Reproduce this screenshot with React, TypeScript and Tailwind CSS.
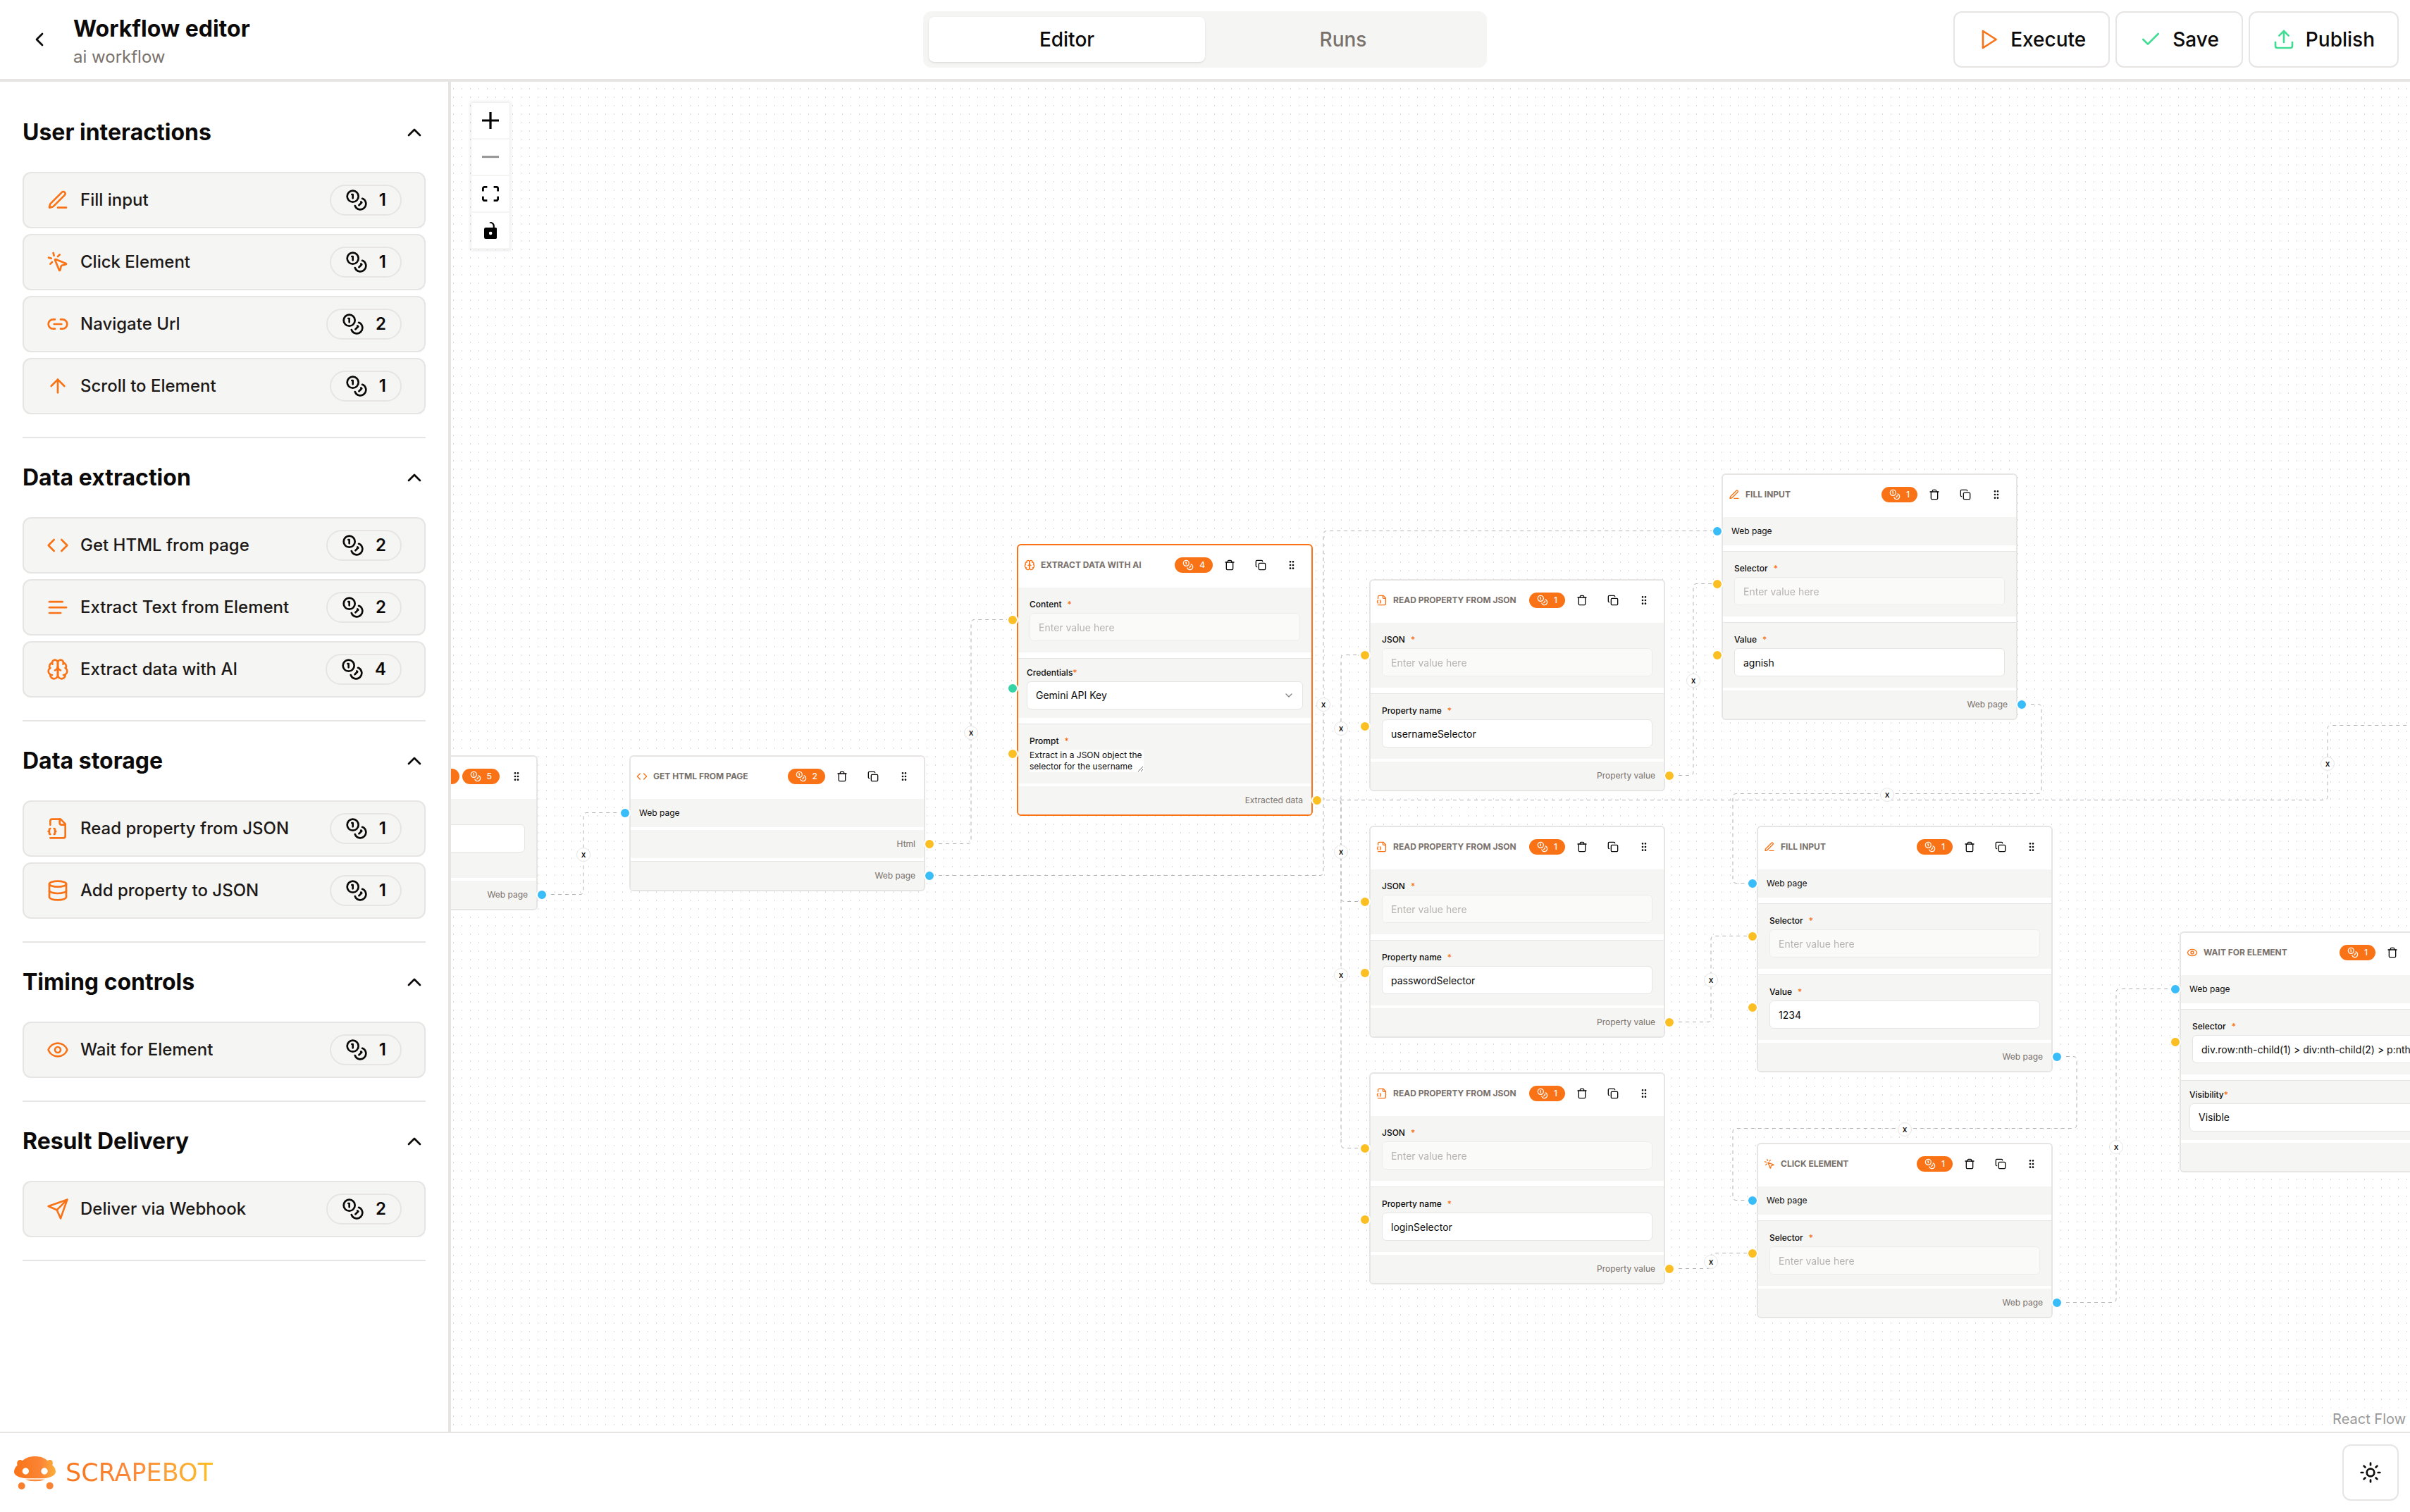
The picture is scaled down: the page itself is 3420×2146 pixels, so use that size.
import { ReactNode, SVGProps, useId } from 'react';
import {
  ArrowUp,
  Check,
  ChevronDown,
  ChevronLeft,
  ChevronUp,
  Code,
  Copy,
  Database,
  Eye,
  GripVertical,
  Link2,
  MousePointerClick,
  Sun,
  Trash,
  Upload,
} from 'lucide-react';

type Point = [number, number];

function Icon({ children, ...props }: SVGProps<SVGSVGElement>) {
  return (
    <svg
      viewBox="0 0 24 24"
      fill="none"
      stroke="currentColor"
      strokeWidth="2"
      strokeLinecap="round"
      strokeLinejoin="round"
      aria-hidden="true"
      {...props}
    >
      {children}
    </svg>
  );
}

const CoinsIcon = (props: SVGProps<SVGSVGElement>) => (
  <Icon {...props}>
    <circle cx="8" cy="8" r="6" />
    <path d="M18.09 10.37A6 6 0 1 1 10.34 18" />
    <path d="M7 6h1v4" />
    <path d="m16.71 13.88.7.71-2.82 2.82" />
  </Icon>
);

const PenLineIcon = (props: SVGProps<SVGSVGElement>) => (
  <Icon {...props}>
    <path d="M12 20h9" />
    <path d="M16.376 3.622a1 1 0 0 1 3.002 3.002L7.368 18.635a2 2 0 0 1-.855.506l-2.872.838a.5.5 0 0 1-.62-.62l.838-2.872a2 2 0 0 1 .506-.854z" />
  </Icon>
);

const TextIcon = (props: SVGProps<SVGSVGElement>) => (
  <Icon {...props}>
    <path d="M17 6.1H3" />
    <path d="M21 12.1H3" />
    <path d="M15.1 18H3" />
  </Icon>
);

const BrainIcon = (props: SVGProps<SVGSVGElement>) => (
  <Icon {...props}>
    <path d="M12 5a3 3 0 1 0-5.997.125 4 4 0 0 0-2.526 5.77 4 4 0 0 0 .556 6.588A4 4 0 1 0 12 18Z" />
    <path d="M12 5a3 3 0 1 1 5.997.125 4 4 0 0 1 2.526 5.77 4 4 0 0 1-.556 6.588A4 4 0 1 1 12 18Z" />
    <path d="M15 13a4.5 4.5 0 0 1-3-4 4.5 4.5 0 0 1-3 4" />
    <path d="M17.599 6.5a3 3 0 0 0 .399-1.375" />
    <path d="M6.003 5.125A3 3 0 0 0 6.401 6.5" />
    <path d="M3.477 10.896a4 4 0 0 1 .585-.396" />
    <path d="M19.938 10.5a4 4 0 0 1 .585.396" />
    <path d="M6 18a4 4 0 0 1-1.967-.516" />
    <path d="M19.967 17.484A4 4 0 0 1 18 18" />
  </Icon>
);

const FileJsonIcon = (props: SVGProps<SVGSVGElement>) => (
  <Icon {...props}>
    <path d="M4 22h14a2 2 0 0 0 2-2V7l-5-5H6a2 2 0 0 0-2 2v4" />
    <path d="M14 2v4a2 2 0 0 0 2 2h4" />
    <path d="M4 12a1 1 0 0 0-1 1v1a1 1 0 0 1-1 1 1 1 0 0 1 1 1v1a1 1 0 0 0 1 1" />
    <path d="M8 18a1 1 0 0 0 1-1v-1a1 1 0 0 1 1-1 1 1 0 0 1-1-1v-1a1 1 0 0 0-1-1" />
  </Icon>
);

const SendIcon = (props: SVGProps<SVGSVGElement>) => (
  <Icon {...props}>
    <path d="m22 2-7 20-4-9-9-4Z" />
    <path d="M22 2 11 13" />
  </Icon>
);

const PlayIcon = (props: SVGProps<SVGSVGElement>) => (
  <Icon {...props}>
    <path d="m6 3 14 9-14 9z" />
  </Icon>
);

const taskIcons = {
  fill: PenLineIcon,
  click: MousePointerClick,
  navigate: Link2,
  scroll: ArrowUp,
  html: Code,
  text: TextIcon,
  ai: BrainIcon,
  readJson: FileJsonIcon,
  addJson: Database,
  wait: Eye,
  webhook: SendIcon,
};

type TaskIcon = keyof typeof taskIcons;

const sections: { title: string; tasks: { icon: TaskIcon; label: string; credits: number }[] }[] = [
  {
    title: 'User interactions',
    tasks: [
      { icon: 'fill', label: 'Fill input', credits: 1 },
      { icon: 'click', label: 'Click Element', credits: 1 },
      { icon: 'navigate', label: 'Navigate Url', credits: 2 },
      { icon: 'scroll', label: 'Scroll to Element', credits: 1 },
    ],
  },
  {
    title: 'Data extraction',
    tasks: [
      { icon: 'html', label: 'Get HTML from page', credits: 2 },
      { icon: 'text', label: 'Extract Text from Element', credits: 2 },
      { icon: 'ai', label: 'Extract data with AI', credits: 4 },
    ],
  },
  {
    title: 'Data storage',
    tasks: [
      { icon: 'readJson', label: 'Read property from JSON', credits: 1 },
      { icon: 'addJson', label: 'Add property to JSON', credits: 1 },
    ],
  },
  {
    title: 'Timing controls',
    tasks: [{ icon: 'wait', label: 'Wait for Element', credits: 1 }],
  },
  {
    title: 'Result Delivery',
    tasks: [{ icon: 'webhook', label: 'Deliver via Webhook', credits: 2 }],
  },
];

const handleColors = {
  page: 'bg-[#38bdf8]',
  string: 'bg-[#fbbf24]',
  credential: 'bg-[#34d3a6]',
};

type HandleKind = keyof typeof handleColors;

type NodeInput = {
  label: string;
  type: 'page' | 'string' | 'select' | 'textarea';
  handle?: HandleKind;
  value?: string;
  connected?: boolean;
};

type WorkflowNode = {
  x: number;
  y: number;
  icon: TaskIcon;
  title: string;
  credits: number;
  entryPoint?: boolean;
  selected?: boolean;
  inputs: NodeInput[];
  outputs: { label: string; handle: HandleKind }[];
};

const readProperty = (y: number, value: string): WorkflowNode => ({
  x: 1303,
  y,
  icon: 'readJson',
  title: 'Read property from JSON',
  credits: 1,
  inputs: [
    { label: 'JSON', type: 'string', handle: 'string', connected: true },
    { label: 'Property name', type: 'string', handle: 'string', value },
  ],
  outputs: [{ label: 'Property value', handle: 'string' }],
});

const fillInput = (x: number, y: number, value: string): WorkflowNode => ({
  x,
  y,
  icon: 'fill',
  title: 'Fill input',
  credits: 1,
  inputs: [
    { label: 'Web page', type: 'page', handle: 'page' },
    { label: 'Selector', type: 'string', handle: 'string', connected: true },
    { label: 'Value', type: 'string', handle: 'string', value },
  ],
  outputs: [{ label: 'Web page', handle: 'page' }],
});

const nodes: WorkflowNode[] = [
  {
    x: -297,
    y: 956,
    icon: 'navigate',
    title: '',
    credits: 5,
    entryPoint: true,
    inputs: [{ label: '', type: 'string', value: '' }],
    outputs: [{ label: 'Web page', handle: 'page' }],
  },
  {
    x: 253,
    y: 956,
    icon: 'html',
    title: 'Get HTML from page',
    credits: 2,
    inputs: [{ label: 'Web page', type: 'page', handle: 'page' }],
    outputs: [
      { label: 'Html', handle: 'string' },
      { label: 'Web page', handle: 'page' },
    ],
  },
  {
    x: 803,
    y: 656,
    icon: 'ai',
    title: 'Extract data with AI',
    credits: 4,
    selected: true,
    inputs: [
      { label: 'Content', type: 'string', handle: 'string', connected: true },
      { label: 'Credentials', type: 'select', handle: 'credential', value: 'Gemini API Key' },
      {
        label: 'Prompt',
        type: 'textarea',
        handle: 'string',
        value: 'Extract in a JSON object the selector for the username',
      },
    ],
    outputs: [{ label: 'Extracted data', handle: 'string' }],
  },
  readProperty(706, 'usernameSelector'),
  readProperty(1056, 'passwordSelector'),
  readProperty(1406, 'loginSelector'),
  fillInput(1803, 556, 'agnish'),
  fillInput(1853, 1056, '1234'),
  {
    x: 1853,
    y: 1506,
    icon: 'click',
    title: 'Click Element',
    credits: 1,
    inputs: [
      { label: 'Web page', type: 'page', handle: 'page' },
      { label: 'Selector', type: 'string', handle: 'string', connected: true },
    ],
    outputs: [{ label: 'Web page', handle: 'page' }],
  },
  {
    x: 2453,
    y: 1206,
    icon: 'wait',
    title: 'Wait for Element',
    credits: 1,
    inputs: [
      { label: 'Web page', type: 'page', handle: 'page' },
      {
        label: 'Selector',
        type: 'string',
        handle: 'string',
        value: 'div.row:nth-child(1) > div:nth-child(2) > p:nth-child(1)',
      },
      { label: 'Visibility', type: 'select', value: 'Visible' },
    ],
    outputs: [{ label: 'Web page', handle: 'page' }],
  },
];

const edges: { source: Point; target: Point }[] = [
  { source: [137, 1154], target: [239, 1038] },
  { source: [687, 1082], target: [789, 764] },
  { source: [687, 1127], target: [1789, 638] },
  { source: [1237, 1020], target: [1289, 814] },
  { source: [1237, 1020], target: [1289, 1164] },
  { source: [1237, 1020], target: [1289, 1514] },
  { source: [1237, 1020], target: [4089, 914] },
  { source: [1737, 985], target: [1789, 713] },
  { source: [1737, 1335], target: [1839, 1213] },
  { source: [1737, 1685], target: [1839, 1663] },
  { source: [2237, 884], target: [1839, 1138] },
  { source: [2287, 1384], target: [1839, 1588] },
  { source: [2287, 1733], target: [2439, 1288] },
];

// Orthogonal route with small rounded corners
function edgePath([sx, sy]: Point, [tx, ty]: Point) {
  const midX = (sx + tx) / 2;
  const midY = (sy + ty) / 2;
  const points: Point[] =
    tx > sx
      ? [[sx, sy], [midX, sy], [midX, ty], [tx, ty]]
      : [[sx, sy], [sx + 20, sy], [sx + 20, midY], [tx - 20, midY], [tx - 20, ty], [tx, ty]];

  return points.reduce((path, [x, y], i) => {
    if (i === 0) return `M${x} ${y}`;
    if (i === points.length - 1) return `${path}L${x} ${y}`;
    const [px, py] = points[i - 1];
    const [nx, ny] = points[i + 1];
    const r = Math.min(5, (Math.abs(x - px) + Math.abs(y - py)) / 2, (Math.abs(nx - x) + Math.abs(ny - y)) / 2);
    const inX = x - Math.sign(x - px) * r;
    const inY = y - Math.sign(y - py) * r;
    const outX = x + Math.sign(nx - x) * r;
    const outY = y + Math.sign(ny - y) * r;
    return `${path}L${inX} ${inY}Q${x} ${y} ${outX} ${outY}`;
  }, '');
}

function Handle({ kind, side }: { kind: HandleKind; side: 'left' | 'right' }) {
  return (
    <span
      className={`absolute top-1/2 size-4 -translate-y-1/2 rounded-full border-2 border-white ${
        side === 'left' ? '-left-4' : '-right-4'
      } ${handleColors[kind]}`}
    />
  );
}

function NodeField({ input }: { input: NodeInput }) {
  const id = useId();
  const { label, type, value, connected, handle } = input;

  if (type === 'page') {
    return (
      <div className="relative bg-stone-100 p-3">
        <p className="text-xs leading-4">{label}</p>
        {handle && <Handle kind={handle} side="left" />}
      </div>
    );
  }

  if (type === 'select') {
    return (
      <div className="relative flex flex-col gap-1 bg-stone-100 p-3">
        <label htmlFor={id} className="text-xs leading-4 font-medium">
          {label}
          <span className="text-[#f97316]">*</span>
        </label>
        <div className="relative">
          <select
            id={id}
            defaultValue={value}
            className="h-10 w-full appearance-none rounded-md border border-stone-200 bg-white px-3 text-sm"
          >
            <option>{value}</option>
          </select>
          <ChevronDown className="pointer-events-none absolute top-3 right-3 size-4 opacity-50" />
        </div>
        {handle && <Handle kind={handle} side="left" />}
      </div>
    );
  }

  return (
    <div className="relative bg-stone-100 p-3">
      <div className="flex flex-col gap-1 p-1">
        <label htmlFor={id} className="flex h-4 text-xs leading-4 font-medium">
          {label}
          <span className="px-2 text-[#f97316]">*</span>
        </label>
        {type === 'textarea' ? (
          <textarea
            id={id}
            rows={2}
            defaultValue={value}
            className="block h-8 w-[162px] resize overflow-hidden bg-white text-xs leading-4"
          />
        ) : (
          <input
            id={id}
            type="text"
            defaultValue={value}
            disabled={connected}
            placeholder={connected ? 'Enter value here' : undefined}
            className="h-10 w-full rounded-md border border-stone-200 bg-white px-3 text-sm placeholder:text-stone-500 disabled:opacity-50"
          />
        )}
        {label === '' && <p className="h-4 text-xs leading-4" />}
      </div>
      {handle && <Handle kind={handle} side="left" />}
    </div>
  );
}

function NodeButton({ label, children }: { label: string; children: ReactNode }) {
  return (
    <button type="button" aria-label={label} className="flex size-10 items-center justify-center rounded-md">
      {children}
    </button>
  );
}

function NodeCard({ node }: { node: WorkflowNode }) {
  const TaskIconView = taskIcons[node.icon];

  return (
    <article
      className={`absolute flex w-[420px] flex-col gap-1 rounded-md border-2 bg-white ${
        node.selected ? 'border-[#f97316]' : 'border-stone-200'
      }`}
      style={{ left: node.x, top: node.y }}
    >
      <div className="flex items-center gap-2 p-2">
        <TaskIconView className="size-4 shrink-0 text-[#f97316]" />
        <div className="flex w-full items-center justify-between">
          <h3 className="text-xs font-bold whitespace-nowrap text-stone-500 uppercase">{node.title}</h3>
          <div className="flex items-center gap-1">
            {node.entryPoint && <span className="h-[22px] w-24 rounded-full bg-[#f97316]" />}
            <span className="flex items-center gap-2 rounded-full border border-transparent bg-[#f97316] bg-clip-border px-2.5 py-0.5 text-xs leading-4 font-medium text-stone-50">
              <CoinsIcon className="size-4" />
              {node.credits}
            </span>
            {!node.entryPoint && (
              <>
                <NodeButton label="Delete node">
                  <Trash className="size-4" />
                </NodeButton>
                <NodeButton label="Duplicate node">
                  <Copy className="size-4" />
                </NodeButton>
              </>
            )}
            <NodeButton label="Drag node">
              <GripVertical className="size-4" />
            </NodeButton>
          </div>
        </div>
      </div>
      <div className="flex flex-col gap-2">
        {node.inputs.map((input, i) => (
          <div key={input.label} className={i > 0 ? 'border-t border-stone-200' : ''}>
            <NodeField input={input} />
          </div>
        ))}
      </div>
      <div className="flex flex-col gap-1">
        {node.outputs.map((output, i) => (
          <div key={output.label} className={i > 0 ? 'border-t border-stone-200' : ''}>
            <div className="relative rounded-b-sm bg-stone-100 p-3 text-right">
              <p className="text-xs leading-4 text-stone-500">{output.label}</p>
              <Handle kind={output.handle} side="right" />
            </div>
          </div>
        ))}
      </div>
    </article>
  );
}

function FlowControls() {
  const button = 'flex h-[52px] w-[54px] items-center justify-center border-b-2 border-stone-100 bg-white';
  return (
    <div className="absolute top-[30px] left-[29px] flex flex-col shadow-[0_0_4px_2px_rgba(0,0,0,0.08)]">
      <button type="button" aria-label="Zoom in" className={button}>
        <svg viewBox="0 0 32 32" className="size-6">
          <path d="M32 18.133H18.133V32h-4.266V18.133H0v-4.266h13.867V0h4.266v13.867H32z" />
        </svg>
      </button>
      <button type="button" aria-label="Zoom out" disabled className={button}>
        <svg viewBox="0 0 32 5" className="w-6 opacity-40">
          <path d="M0 0h32v4.2H0z" />
        </svg>
      </button>
      <button type="button" aria-label="Fit view" className={button}>
        <svg viewBox="0 0 32 30" className="w-6">
          <path d="M3.692 4.63c0-.53.4-.938.939-.938h5.215V0H4.708C2.13 0 0 2.054 0 4.63v5.216h3.692V4.631zM27.354 0h-5.2v3.692h5.17c.53 0 .984.4.984.939v5.215H32V4.631A4.624 4.624 0 0027.354 0zm.954 24.83c0 .532-.4.94-.939.94h-5.215v3.768h5.215c2.577 0 4.631-2.13 4.631-4.707v-5.139h-3.692v5.139zm-23.677.94c-.531 0-.939-.4-.939-.94v-5.138H0v5.139c0 2.577 2.13 4.707 4.708 4.707h5.138V25.77H4.631z" />
        </svg>
      </button>
      <button type="button" aria-label="Toggle interactivity" className={button}>
        <svg viewBox="0 0 25 32" className="h-6">
          <path d="M21.333 10.667H19.81V7.619C19.81 3.429 16.38 0 12.19 0c-4.114 1.828-1.37 2.133.305 2.438 1.676.305 4.42 2.59 4.42 5.181v3.048H3.047A3.056 3.056 0 000 13.714v15.238A3.056 3.056 0 003.048 32h18.285a3.056 3.056 0 003.048-3.048V13.714a3.056 3.056 0 00-3.048-3.047zM12.19 24.533a3.056 3.056 0 01-3.047-3.047 3.056 3.056 0 013.047-3.048 3.056 3.056 0 013.048 3.048 3.056 3.056 0 01-3.048 3.047z" />
        </svg>
      </button>
    </div>
  );
}

function FlowCanvas() {
  return (
    <main className="relative min-w-0 flex-1 overflow-hidden bg-white">
      <svg className="absolute inset-0 size-full" aria-hidden="true">
        <defs>
          <pattern id="dots" width="12" height="12" patternUnits="userSpaceOnUse">
            <rect x="3" y="9" width="1" height="2" fill="#91919a" fillOpacity="0.36" />
          </pattern>
        </defs>
        <rect width="100%" height="100%" fill="url(#dots)" />
        {edges.map(({ source, target }) => (
          <path
            key={`${source}-${target}`}
            d={edgePath([source[0], source[1] - 0.5], [target[0], target[1] - 0.5])}
            fill="none"
            stroke="#b1b1b7"
            strokeDasharray="5"
            strokeDashoffset="5"
          />
        ))}
      </svg>
      {nodes.map((node) => (
        <NodeCard key={`${node.x}-${node.y}`} node={node} />
      ))}
      {edges.map(({ source, target }) => (
        <button
          key={`${source}-${target}`}
          type="button"
          aria-label="Delete edge"
          className="absolute flex size-5 -translate-1/2 items-center justify-center rounded-full border border-stone-200 bg-white text-xs leading-none font-medium"
          style={{ left: (source[0] + target[0]) / 2, top: Math.round((source[1] + target[1]) / 2) + 1 }}
        >
          x
        </button>
      ))}
      <FlowControls />
      <a
        href="https://reactflow.dev"
        className="absolute right-0 bottom-0 bg-white/50 px-1.5 py-1 text-[20px] leading-7 text-[#999]"
      >
        React Flow
      </a>
    </main>
  );
}

function Topbar() {
  const action = 'flex h-20 items-center gap-[15px] rounded-xl border-2 border-stone-200 bg-white px-8 text-[28px] font-medium';
  return (
    <header className="grid h-[116px] shrink-0 grid-cols-[1fr_800px_1fr] items-center border-b-4 border-stone-200 px-4">
      <div className="flex items-center gap-2">
        <button type="button" aria-label="Back" className="flex size-20 items-center justify-center">
          <ChevronLeft className="size-8" />
        </button>
        <div className="pt-0.5">
          <h1 className="text-[32px] leading-[48px] font-bold">Workflow editor</h1>
          <p className="text-2xl leading-8 text-stone-500">ai workflow</p>
        </div>
      </div>
      <nav className="grid h-20 grid-cols-2 rounded-xl bg-stone-100 p-2 text-[28px] font-medium">
        <a href="#editor" className="flex items-center justify-center rounded-lg bg-white shadow-sm">
          Editor
        </a>
        <a href="#runs" className="flex items-center justify-center rounded-lg text-stone-500">
          Runs
        </a>
      </nav>
      <div className="flex justify-end gap-2">
        <button type="button" className={action}>
          <PlayIcon className="size-8 text-[#f97316]" />
          Execute
        </button>
        <button type="button" className={action}>
          <Check className="size-8 text-[#43dc95]" />
          Save
        </button>
        <button type="button" className={action}>
          <Upload className="size-8 text-[#43dc95]" />
          Publish
        </button>
      </div>
    </header>
  );
}

function TaskMenu() {
  return (
    <aside className="w-[640px] shrink-0 overflow-auto border-r-4 border-stone-200 px-8 pt-4">
      {sections.map((section) => (
        <section key={section.title} className="border-b-2 border-stone-200 pb-8">
          <h2>
            <button type="button" aria-expanded="true" className="flex w-full items-center justify-between py-8">
              <span className="text-[32px] leading-[48px] font-bold">{section.title}</span>
              <ChevronUp className="size-8" />
            </button>
          </h2>
          <div className="flex flex-col gap-2">
            {section.tasks.map(({ icon, label, credits }) => {
              const TaskIconView = taskIcons[icon];
              return (
                <button
                  key={label}
                  type="button"
                  className="flex h-20 w-full items-center justify-between rounded-xl border-2 border-stone-200 bg-stone-100 px-8 text-2xl font-medium text-stone-900"
                >
                  <span className="flex items-center gap-4">
                    <TaskIconView className="size-8 text-[#f97316]" />
                    {label}
                  </span>
                  <span className="flex h-11 items-center gap-4 rounded-full border-2 border-stone-200 px-5 text-2xl leading-8 font-semibold text-stone-950">
                    <CoinsIcon className="size-8" />
                    {credits}
                  </span>
                </button>
              );
            })}
          </div>
        </section>
      ))}
    </aside>
  );
}

function Logo() {
  return (
    <a href="/" className="flex items-center gap-3.5">
      <svg viewBox="33 52 177 141" className="h-[47px] w-[59px]" aria-hidden="true">
        <defs>
          <linearGradient id="bot" x1="0" x2="1" y1="0" y2="0">
            <stop offset="0" stopColor="#f97316" />
            <stop offset="0.65" stopColor="#fb8535" />
            <stop offset="1" stopColor="#fbb03a" />
          </linearGradient>
        </defs>
        <path
          fill="url(#bot)"
          fillRule="evenodd"
          d="M33 118C33 106 39 96 47 90C43 77 49 67 59 67C63 67 66 69 69 71C82 58 100 52 122 52C144 52 162 58 176 71C180 67 184 66 188 67C197 69 200 79 196 90C205 96 210 106 210 117C210 132 190 142 162 146H82C52 143 33 132 33 118ZM82 101a14 14 0 1 0 .1 0ZM162 101a14 14 0 1 0 .1 0Z"
        />
        <path fill="#fb8b3c" d="M82 150H163C150 160 96 160 82 150Z" />
        <circle cx="65" cy="178" r="15" fill="#f97f2c" />
        <circle cx="185" cy="177" r="15" fill="#f98334" />
      </svg>
      <span className="bg-linear-to-r from-[#f97316] via-[#fb8c3c] to-[#fbbf24] bg-clip-text font-['DejaVu_Sans',sans-serif] text-[35px] leading-10 text-transparent">
        SCRAPEBOT
      </span>
    </a>
  );
}

export default function App() {
  return (
    <div className="flex h-screen flex-col overflow-hidden bg-white font-['Inter',sans-serif] text-stone-950">
      <Topbar />
      <div className="flex min-h-0 flex-1">
        <TaskMenu />
        <FlowCanvas />
      </div>
      <footer className="flex h-[114px] shrink-0 items-center justify-between border-t-2 border-stone-200 pr-4 pl-5">
        <Logo />
        <button
          type="button"
          aria-label="Toggle theme"
          className="flex size-20 items-center justify-center rounded-xl border-2 border-stone-200"
        >
          <Sun className="size-8" />
        </button>
      </footer>
    </div>
  );
}
